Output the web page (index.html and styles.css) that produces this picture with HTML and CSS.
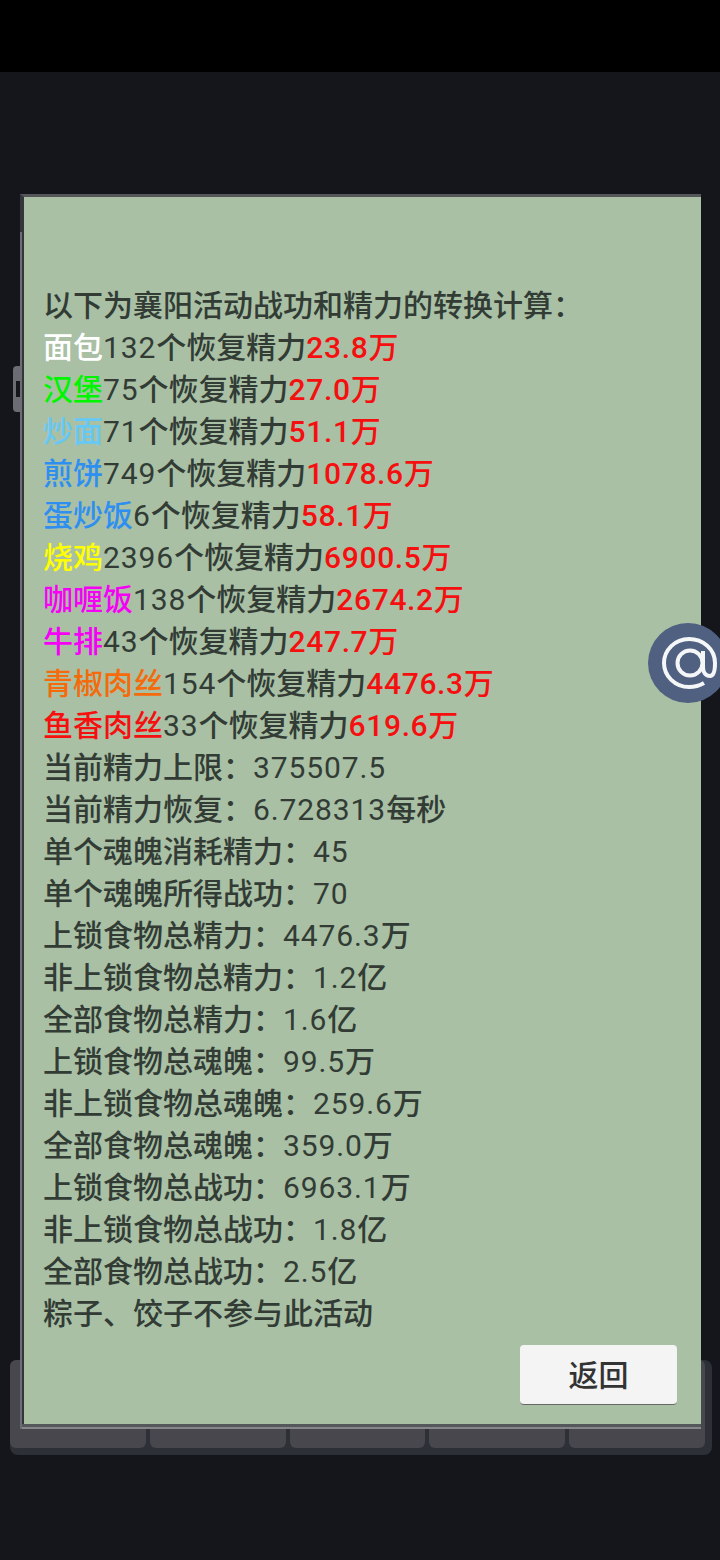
FILE: index.html
```html
<!DOCTYPE html>
<html lang="zh-CN">
<head>
  <meta charset="UTF-8">
  <meta name="viewport" content="width=device-width, initial-scale=1.0">
  <title>襄阳活动</title>
  <link rel="stylesheet" href="styles.css">
</head>
<body>
  <div class="screen">
    <div class="status-bar"></div>

    <!-- game behind the dialog -->
    <div class="backdrop">
      <div class="frame">
        <div class="side-tab"><span class="side-tab-notch"></span></div>
      </div>
      <div class="tab-row">
        <div class="tab-btn"></div>
        <div class="tab-btn"></div>
        <div class="tab-btn"></div>
        <div class="tab-btn"></div>
        <div class="tab-btn"></div>
      </div>
    </div>

    <div class="dialog">
      <div class="lines">
        <p>以下为襄阳活动战功和精力的转换计算：</p>
        <p><span class="c-white">面包</span><span class="num">132</span>个恢复精力<span class="c-red"><span class="num">23.8</span>万</span></p>
        <p><span class="c-green">汉堡</span><span class="num">75</span>个恢复精力<span class="c-red"><span class="num">27.0</span>万</span></p>
        <p><span class="c-sky">炒面</span><span class="num">71</span>个恢复精力<span class="c-red"><span class="num">51.1</span>万</span></p>
        <p><span class="c-blue">煎饼</span><span class="num">749</span>个恢复精力<span class="c-red"><span class="num">1078.6</span>万</span></p>
        <p><span class="c-blue">蛋炒饭</span><span class="num">6</span>个恢复精力<span class="c-red"><span class="num">58.1</span>万</span></p>
        <p><span class="c-yellow">烧鸡</span><span class="num">2396</span>个恢复精力<span class="c-red"><span class="num">6900.5</span>万</span></p>
        <p><span class="c-pink">咖喱饭</span><span class="num">138</span>个恢复精力<span class="c-red"><span class="num">2674.2</span>万</span></p>
        <p><span class="c-pink">牛排</span><span class="num">43</span>个恢复精力<span class="c-red"><span class="num">247.7</span>万</span></p>
        <p><span class="c-orange">青椒肉丝</span><span class="num">154</span>个恢复精力<span class="c-red"><span class="num">4476.3</span>万</span></p>
        <p><span class="c-red">鱼香肉丝</span><span class="num">33</span>个恢复精力<span class="c-red"><span class="num">619.6</span>万</span></p>
        <p>当前精力上限：<span class="num">375507.5</span></p>
        <p>当前精力恢复：<span class="num">6.728313</span>每秒</p>
        <p>单个魂魄消耗精力：<span class="num">45</span></p>
        <p>单个魂魄所得战功：<span class="num">70</span></p>
        <p>上锁食物总精力：<span class="num">4476.3</span>万</p>
        <p>非上锁食物总精力：<span class="num">1.2</span>亿</p>
        <p>全部食物总精力：<span class="num">1.6</span>亿</p>
        <p>上锁食物总魂魄：<span class="num">99.5</span>万</p>
        <p>非上锁食物总魂魄：<span class="num">259.6</span>万</p>
        <p>全部食物总魂魄：<span class="num">359.0</span>万</p>
        <p>上锁食物总战功：<span class="num">6963.1</span>万</p>
        <p>非上锁食物总战功：<span class="num">1.8</span>亿</p>
        <p>全部食物总战功：<span class="num">2.5</span>亿</p>
        <p>粽子、饺子不参与此活动</p>
      </div>
      <div class="dialog-actions">
        <button class="back-btn">返回</button>
      </div>
    </div>

    <div class="float-btn">
      <svg width="80" height="80" viewBox="0 0 80 80">
        <circle cx="40" cy="40" r="40" fill="#4f6080"/>
        <circle cx="42" cy="40" r="12.5" fill="none" stroke="#f4f6f8" stroke-width="4"/>
        <path d="M55 28V44C55 50 58 53 62 53C66 53 67 48 67 40C67 26 55 16 41 16C27 16 16 27 16 40C16 53 27 64 41 64C46 64 51 63 56 60" fill="none" stroke="#f4f6f8" stroke-width="4"/>
      </svg>
    </div>
  </div>
</body>
</html>
```

FILE: styles.css
```css
body {
  margin: 0;
  background-color: #14161b;
  font-family: "Noto Sans CJK SC", "Noto Sans", sans-serif;
}
p {
  margin: 0;
}
.screen {
  position: relative;
  width: 720px;
  height: 1560px;
  overflow: hidden;
  background-color: #14161b;
}
.status-bar {
  height: 72px;
  background-color: #000;
}
.backdrop {
  display: flex;
  flex-direction: column;
  padding: 160px 8px 0 10px;
}
.frame {
  position: relative;
  height: 1128px;
}
.side-tab {
  position: absolute;
  left: 3px;
  top: 134px;
  width: 12px;
  height: 46px;
  border-radius: 4px 0 0 4px;
  background-color: #6d6c74;
}
.side-tab-notch {
  display: block;
  width: 8px;
  height: 16px;
  margin: 15px 0 0 3px;
  background-color: #16161a;
}
.tab-row {
  display: flex;
  gap: 4px;
  padding: 0 7px 7px 0;
  border-radius: 8px;
  background-color: #2d3137;
}
.tab-btn {
  flex: 1;
  height: 88px;
  border-radius: 6px;
  background-color: #47474d;
}
.dialog {
  position: absolute;
  left: 20px;
  top: 194px;
  width: 681px;
  height: 1230px;
  box-sizing: border-box;
  padding: 85px 24px 0 19px;
  border-top: 3px solid #54565a;
  border-left: 4px solid #34363b;
  background-color: #a9c0a5;
  box-shadow: 0 3px 0 #55585a, 0 5px 0 #85878b;
  color: #323c35;
  font-size: 30px;
  font-weight: 500;
  line-height: 42px;
}
/* lighter edge of the window underneath */
.dialog::before {
  content: "";
  position: absolute;
  left: -4px;
  top: 35px;
  bottom: -5px;
  width: 2px;
  background-color: #6c6e76;
}
.lines {
  white-space: nowrap;
}
/* digits in the reference are wider than the CJK font's own */
.num {
  font-family: Roboto, sans-serif;
  font-weight: 400;
  line-height: 1;
  letter-spacing: 0.9px;
}
.c-red .num {
  font-weight: 500;
  letter-spacing: 0.65px;
}
.dialog-actions {
  display: flex;
  justify-content: flex-end;
  margin-top: 13px;
}
.back-btn {
  width: 157px;
  height: 60px;
  padding: 0 0 3px;
  border: 0;
  border-bottom: 1px solid #666;
  border-radius: 4px;
  background-color: #f4f4f5;
  color: #333;
  font-family: inherit;
  font-size: 30px;
  font-weight: 500;
}
.float-btn {
  position: absolute;
  left: 648px;
  top: 623px;
  width: 80px;
  height: 80px;
}
.c-white { color: #fff; }
.c-red { color: #f50f0f; }
.c-green { color: #00f500; }
.c-sky { color: #66c8f5; }
.c-blue { color: #2f8ff0; }
.c-yellow { color: #ffff00; }
.c-pink { color: #f500f5; }
.c-orange { color: #f56a0a; }
```
